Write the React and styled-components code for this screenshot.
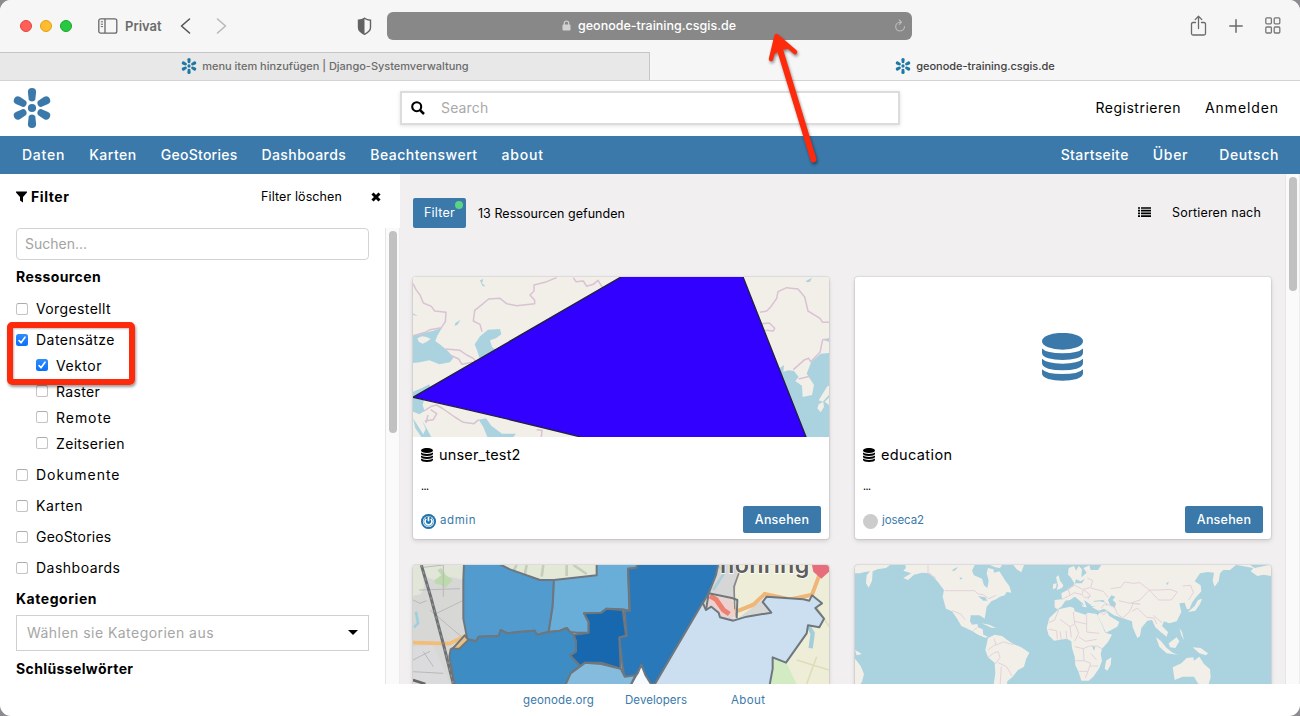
import React from 'react';
import styled, { createGlobalStyle } from 'styled-components';

const BLUE = '#3a79aa';

const GlobalStyle = createGlobalStyle`
  * { box-sizing: border-box; }
  body { margin: 0; background: #8d8b8f; font-family: Inter, "Liberation Sans", sans-serif; color: #000; }
  svg { display: block; flex: none; }
`;

const Text = styled.span`
  font-size: ${p => p.$size || 14}px;
  font-weight: ${p => p.$weight || 400};
  letter-spacing: ${p => p.$track || 0}px;
  color: ${p => p.$color || 'inherit'};
  white-space: nowrap;
`;

const Window = styled.div`
  position: relative;
  display: flex;
  flex-direction: column;
  width: 1300px;
  height: 716px;
  border-radius: 11px;
  overflow: hidden;
  background: #fff;
`;

/* Browser chrome */
const Toolbar = styled.div`
  display: flex;
  align-items: center;
  height: 52px;
  flex: none;
  padding: 0 19px 0 20px;
  background: #f6f6f6;
`;
const Lights = styled.div`
  display: flex;
  gap: 8px;
  margin-right: 26px;
`;
const Light = styled.span`
  width: 12px;
  height: 12px;
  border-radius: 50%;
  background: ${p => p.$fill};
  border: 1px solid ${p => p.$edge};
`;
const PrivateLabel = styled(Text)`
  margin: 0 16px 0 7px;
  width: 39px;
`;
const Address = styled.div`
  display: flex;
  align-items: center;
  width: 525px;
  height: 28px;
  margin-left: 15px;
  padding: 0 6px 1px 175px;
  border-radius: 6px;
  background: #888;
  color: #fff;
`;
const Host = styled(Text)`
  margin-left: 7px;
  flex: 1;
`;
const Tools = styled.div`
  display: flex;
  align-items: center;
  gap: 22px;
  margin-left: auto;
  padding-bottom: 1px;
`;
const Tabs = styled.div`
  display: flex;
  height: 29px;
  flex: none;
  border-bottom: 1px solid #d3d3d3;
`;
const Tab = styled.div`
  display: flex;
  align-items: center;
  justify-content: center;
  gap: 5px;
  flex: 1;
  padding: 0 0 2px 1px;
  background: ${p => (p.$active ? '#f6f6f6' : '#e8e8e8')};
  border-top: 1px solid ${p => (p.$active ? '#f6f6f6' : '#c6c6c6')};
  border-right: 1px solid ${p => (p.$active ? '#f6f6f6' : '#c6c6c6')};
  color: ${p => (p.$active ? '#414141' : '#6c6c6c')};
`;

/* Page header */
const Header = styled.header`
  display: grid;
  grid-template-columns: 400px 500px 1fr;
  align-items: center;
  height: 55px;
  flex: none;
  padding-bottom: 2px;
`;
const LogoSlot = styled.div`
  padding-left: 12px;
`;
const SearchBar = styled.div`
  display: flex;
  align-items: center;
  gap: 16px;
  height: 34px;
  padding-left: 9px;
  border: 2px solid #dcdcdc;
  box-shadow: 0 1px 4px rgba(0, 0, 0, 0.12);
`;
const Account = styled.div`
  display: flex;
  justify-content: flex-end;
  gap: 24px;
  padding-right: 21px;
`;
const Nav = styled.nav`
  display: flex;
  align-items: center;
  justify-content: space-between;
  height: 38px;
  flex: none;
  padding: 0 21px 2px 22px;
  background: ${BLUE};
  color: #fff;
`;
const Menu = styled.div`
  display: flex;
  gap: 24px;
`;
const Language = styled.div`
  display: flex;
  margin-left: 7px;
`;

/* Main area */
const Main = styled.div`
  display: flex;
  height: 510px;
  flex: none;
`;
const Sidebar = styled.aside`
  width: 400px;
  display: flex;
  flex-direction: column;
`;
const SidebarHead = styled.div`
  display: flex;
  align-items: center;
  height: 54px;
  padding: 0 19px 9px 16px;
`;
const SidebarTitle = styled(Text)`
  margin-left: 4px;
  flex: 1;
`;
const ClearLink = styled(Text)`
  margin-right: 29px;
`;
const SidebarBody = styled.div`
  display: flex;
  flex: 1;
`;
const Form = styled.div`
  width: 385px;
  padding: 0 16px;
`;
const Track = styled.div`
  width: 15px;
  flex: none;
  padding: 3px 3px;
  background: #fafafa;
  border-left: 1px solid #e6e6e6;
  border-right: 1px solid #ececec;
`;
const Thumb = styled.div`
  width: 8px;
  height: ${p => p.$height}px;
  border-radius: 4px;
  background: #c1c1c1;
`;
const Input = styled.div`
  display: flex;
  align-items: center;
  height: 32px;
  padding: 0 0 2px 8px;
  border: 1px solid #d3d3d3;
  border-radius: 4px;
`;
const Heading = styled.div`
  display: flex;
  align-items: center;
  height: ${p => p.$height}px;
  padding-bottom: ${p => p.$lift || 0}px;
`;
const Check = styled.div`
  display: flex;
  align-items: center;
  gap: 8px;
  height: ${p => (p.$sub ? 26 : 31)}px;
`;
const SubList = styled.div`
  margin: -3px 0 3px;
  padding-left: 20px;
`;
const Box = styled.span`
  display: flex;
  align-items: center;
  justify-content: center;
  width: 12px;
  height: 12px;
  border-radius: 2.5px;
  border: ${p => (p.$on ? 'none' : '1px solid #c4c4c4')};
  border-top-color: #adadad;
  background: ${p => (p.$on ? 'linear-gradient(#2f8cfb, #0a6ffa)' : '#fff')};
`;
const Select = styled.div`
  display: flex;
  align-items: center;
  justify-content: space-between;
  height: 36px;
  margin-bottom: 3px;
  padding: 0 10px 1px;
  border: 1px solid #d0d0d0;
`;

const Results = styled.section`
  flex: 1;
  padding: 24px 14px 0 13px;
  background: #f1eff0;
  overflow: hidden;
`;
const ResultBar = styled.div`
  display: flex;
  align-items: center;
  height: 30px;
  margin-bottom: 49px;
  padding-right: 10px;
`;
const FilterButton = styled.div`
  position: relative;
  display: flex;
  justify-content: center;
  width: 53px;
  height: 30px;
  margin-right: 12px;
  padding-top: 7px;
  border-radius: 2px;
  background: ${BLUE};
  color: #fff;
  line-height: 15px;
`;
const Dot = styled.span`
  position: absolute;
  top: 3px;
  right: 3px;
  width: 8px;
  height: 8px;
  border-radius: 50%;
  background: #5ad384;
`;
const SortGroup = styled.div`
  display: flex;
  align-items: center;
  gap: 21px;
  margin-left: auto;
  padding-bottom: 2px;
`;
const Cards = styled.div`
  display: grid;
  grid-template-columns: 416px 416px;
  gap: 26px;
`;
const Card = styled.article`
  height: 262px;
  border-radius: 3px;
  overflow: hidden;
  background: #fff;
  box-shadow: 0 0 1px 1px rgba(0, 0, 0, 0.07), 0 2px 5px rgba(0, 0, 0, 0.14);
`;
const Thumbnail = styled.div`
  display: flex;
  align-items: center;
  justify-content: center;
  height: 160px;
`;
const Placeholder = styled.div`
  padding-right: 2px;
`;
const CardBody = styled.div`
  display: flex;
  flex-direction: column;
  height: 102px;
  padding: 8px 8px 6px;
`;
const CardTitle = styled.div`
  display: flex;
  align-items: center;
  gap: 6px;
  height: 20px;
  padding-bottom: 1px;
`;
const Excerpt = styled.div`
  height: 22px;
  margin-top: 10px;
  display: flex;
  align-items: center;
`;
const CardFoot = styled.div`
  display: flex;
  align-items: center;
  height: 27px;
  margin-top: auto;
`;
const Avatar = styled.span`
  width: 15px;
  height: 15px;
  margin: 4px 4px 0 0;
  border-radius: 50%;
  background: #ccc;
`;
const ViewButton = styled.span`
  display: flex;
  align-items: center;
  justify-content: center;
  width: 78px;
  height: 27px;
  margin-left: auto;
  border-radius: 2px;
  background: ${BLUE};
  color: #fff;
`;
const Footer = styled.footer`
  display: flex;
  align-items: center;
  flex: 1;
  padding-left: 523px;
  color: ${BLUE};
`;
const FooterLink = styled(Text)`
  width: ${p => p.$width}px;
`;

/* Annotations drawn over the page */
const Highlight = styled.div`
  position: absolute;
  left: 7px;
  top: 322px;
  width: 128px;
  height: 63px;
  border: 6px solid #fd2b0b;
  border-radius: 5px;
  box-shadow: 1px 2px 3px rgba(0, 0, 0, 0.4), inset 1px 1px 2px rgba(0, 0, 0, 0.25);
`;
const Arrow = styled.svg`
  position: absolute;
  left: 755px;
  top: 25px;
  filter: drop-shadow(1px 2px 1.5px rgba(0, 0, 0, 0.45));
`;

const Flower = ({ size, color, petal = 'M-3.3 -8.5L-4.1 -16Q-4.1 -20 0 -20Q4.1 -20 4.1 -16L3.3 -8.5Q2.6 -6.6 0 -6.6Q-2.6 -6.6 -3.3 -8.5Z' }) => (
  <svg width={size} height={size} viewBox="-20 -20 40 40" fill={color}>
    <circle r="4.1" />
    {[0, 62, 118, 180, 242, 298].map(a => <path key={a} transform={`rotate(${a})`} d={petal} />)}
  </svg>
);

const Database = ({ width, height, color }) => (
  <svg width={width} height={height} viewBox="606 219 123 144" preserveAspectRatio="none" fill={color}>
    <ellipse cx="667.5" cy="244" rx="61.5" ry="25.5" />
    {[0, 31, 62].map(y => (
      <path key={y} transform={`translate(0 ${y})`} d="M606 265.500Q620 280 667.500 280Q715 280 729 265.500V278Q729 289 710 295Q692 300 667.500 300Q643 300 625 295Q606 289 606 278Z" />
    ))}
  </svg>
);

const SidebarIcon = () => (
  <svg width="20" height="16" viewBox="0 0 20 16" fill="none" stroke="#686868" strokeWidth="1.300">
    <rect x=".8" y=".8" width="18" height="14.400" rx="2" />
    <path d="M7 1v14" /><path d="M2.800 3.800h2.200M2.800 6.200h2.200M2.800 8.600h2.200" strokeWidth="1" />
  </svg>
);
const ShieldIcon = () => (
  <svg width="15" height="19" viewBox="0 0 15 19">
    <path d="M7.500 1.200Q10 3 13.500 3.200V10.500Q13.500 14.500 7.500 17.300Q1.500 14.500 1.500 10.500V3.200Q5 3 7.500 1.200Z" fill="none" stroke="#636363" strokeWidth="1.400" />
    <path d="M7.500 1.200V17.300Q1.500 14.500 1.500 10.500V3.200Q5 3 7.500 1.200Z" fill="#636363" />
  </svg>
);
const Chevron = ({ right }) => (
  <svg width="11" height="18" viewBox="0 0 11 18" fill="none" stroke={right ? '#b9b9b9' : '#555'} strokeWidth="1.600" strokeLinecap="round" strokeLinejoin="round">
    <path d={right ? 'M1.500 2L9.500 9L1.500 16' : 'M9.500 2L1.500 9L9.500 16'} />
  </svg>
);
const BackForward = styled.div`
  display: flex;
  gap: 25px;
  margin-right: 130px;
`;

const Land = '#f2efe9';
const Sea = '#aad3df';

const AsiaMap = () => (
  <svg width="416" height="160" viewBox="39 306 1248 480">
    <rect x="39" y="306" width="1248" height="480" fill={Land} />
    <g fill={Sea}>
      <path d="M39 482L60 476L98 468L126 458L112 482L106 498L122 510L146 530L160 548L150 562L118 568L88 556L60 562L39 564Z" />
      <path d="M224 508L240 484L264 464L300 462L304 478L288 490L270 496L276 516L292 528L260 545L238 548L232 528Z" />
      <path d="M39 650L64 640L88 628L92 646L66 668L39 682Z" />
      <path d="M39 672L72 674L68 690L74 708L58 718L39 710Z" />
      <path d="M39 730L56 756L70 778L77 762L66 736L82 764L94 786H64L46 760Z" />
      <path d="M236 734L258 730L274 752L306 776L348 776L340 786H262L250 756Z" />
      <path d="M240 316L250 312L246 324L256 334L248 334Z" />
      <path d="M166 444L182 434L172 450L164 452ZM39 415L54 424L40 420Z" />
      <path d="M1138 580L1152 570L1150 590L1166 586L1182 588L1196 606L1186 618L1206 632L1208 666L1236 660L1242 630L1220 596L1234 560L1262 536L1287 534V786H1218L1190 714Z" />
      <path d="M1218 318L1236 308L1230 320L1220 322ZM1272 496L1287 490V500Z" />
    </g>
    <g fill={Land}>
      <path d="M52 490L66 484L80 486L92 492L80 500L68 506L56 500Z" />
      <path d="M1282 634L1287 632V660L1268 680L1256 676ZM1256 688L1270 680L1272 696L1262 712L1252 700ZM1274 680L1287 668V690Z" />
    </g>
    <g fill="none" stroke="#d9c2d3" strokeWidth="4.500" strokeLinejoin="round">
      <path d="M39 326L48 344L60 360L70 384L94 394L104 408L138 412L136 440L124 458L90 464L76 472L39 482" />
      <path d="M246 470L240 448L220 438L224 406L242 392L266 372L300 370L320 386L350 392L404 386L404 376L390 360L402 348L402 330L440 320L470 308" />
      <path d="M520 308L528 320L550 318L560 334L580 328L594 316L604 332L610 340" />
      <path d="M136 522L180 526L200 540L220 550L234 570M150 540L176 552L186 568L216 562L226 574" />
      <path d="M72 708L84 700L94 694L110 690L130 702L164 726L190 742L222 746L236 734M74 738L100 734L110 716L92 704M84 720L78 744M410 764L426 766L424 786" />
      <path d="M1080 412L1100 408L1112 396L1130 370L1134 350L1160 338L1194 342L1214 366L1224 408L1260 430L1268 442H1287" />
      <path d="M1086 446L1108 444L1124 460L1120 468L1096 466M1180 584L1214 554L1226 550L1232 560L1260 532L1268 494L1287 492M1196 612L1230 604" />
    </g>
    <path d="M39 667L668 303H1028L1219 788H550Q300 725 39 667Z" fill="#3100ff" stroke="#242044" strokeWidth="4" />
  </svg>
);

const DistrictMap = () => (
  <svg width="416" height="160" viewBox="39 405 1248 480">
    <rect x="39" y="405" width="1248" height="480" fill="#d7d7d6" />
    <path d="M39 405H64L72 470L62 492L39 498ZM64 405H190V450L150 440L110 452L76 440Z" fill="#e2e6d9" />
    <path d="M104 450L124 436L112 420L124 414L138 436L158 450L136 474L122 464L104 460Z" fill="#bddaac" />
    <path d="M39 650L100 646L150 762H39Z" fill="#dbdbdd" />
    <path d="M39 510L60 520L80 512M70 412L130 405M90 540L190 625M110 550L196 508M58 480L180 476M130 405V500M39 690L90 664M100 710L70 665M39 725L130 730" stroke="#b9b9b9" strokeWidth="3" fill="none" />
    <path d="M48 545L54 580L42 592" stroke="#9ed0dc" strokeWidth="8" fill="none" />
    <path d="M39 638L148 641L200 616" stroke="#f4bd76" strokeWidth="11" fill="none" />
    <path d="M290 405H590V436L460 448L420 446L330 418Z" fill="#e4e8d7" />
    <path d="M350 405L340 424M380 405L374 436M430 405L425 440M500 405V438M520 405L560 432" stroke="#c5cdbb" strokeWidth="8" fill="none" />
    <path d="M945 405H1287V762H1110L1120 680L1222 586L1100 500L1010 568L915 530Z" fill="#eeeed8" />
    <path d="M945 405H1018L1002 502L926 490Z" fill="#d6d6d6" />
    <path d="M950 405L975 425L940 480" stroke="#a9cfdb" strokeWidth="8" fill="none" />
    <path d="M1018 425L1002 470L1005 560" stroke="#888" strokeWidth="5" fill="none" />
    <path d="M1260 430L1236 494L1170 508L1094 492L1060 524L1016 542L976 548" stroke="#efb678" strokeWidth="12" fill="none" />
    <path d="M922 494L996 506L1008 562L970 562L920 536Z" fill="#ecd1d1" />
    <path d="M930 498L948 508L970 540L988 552" stroke="#ee806f" strokeWidth="15" fill="none" />
    <path d="M1236 405H1287V425L1264 446L1240 425Z" fill="#e76c7c" />
    <path d="M1226 590L1238 610L1232 655" stroke="#a3cdd9" strokeWidth="13" fill="none" />
    <path d="M1244 520L1287 590M1190 690L1287 720M1220 762L1250 680" stroke="#dfddb8" strokeWidth="5" fill="none" />
    <path d="M1118 682L1158 696L1190 762H1110Z" fill="#d3ebc3" />
    <text x="960" y="429" fontFamily="Inter, sans-serif" fontSize="70" fontWeight="600" fill="#5e5e5e" stroke="#fff" strokeWidth="4" paintOrder="stroke" textLength="268">honring</text>
    <g stroke="#6e777d" strokeWidth="6" strokeLinejoin="round">
      <path d="M192 400H294L330 418L420 450H462L458 530L446 606L410 614L404 602L354 606L322 610L302 600L296 618L236 620L228 634L202 628L190 566V450Z" fill="#519bce" />
      <path d="M462 450L590 436V400H715L708 414L684 416L688 542L668 538L620 536L604 548L552 550L566 576V608H532L510 606L500 594L480 602L446 606L458 530Z" fill="#69aed8" />
      <path d="M715 400H955L948 435L926 490L765 762H736L724 706L706 740H674L668 712L658 622L680 618L674 542H690L684 416L708 414Z" fill="#2979ba" />
      <path d="M552 550L604 548L620 536L668 540L678 616L658 622L662 716L604 698L556 698L540 708L510 676L528 664V634L520 614L566 608V576Z" fill="#1868b0" />
      <path d="M202 628L228 634L236 620L296 618L302 600L322 610L354 606L404 602L410 614L446 606L480 602L500 594L510 606L520 614L528 634V664L510 676L540 708L512 730L494 770H165L148 680L152 658Z" fill="#3d8cc4" />
      <path d="M494 770L512 730L556 698L604 702L662 716L674 740L706 736L690 770Z" fill="#85bbdd" />
      <path d="M690 770L706 740L714 728L724 704L736 735L758 770Z" fill="#f5faff" />
      <path d="M765 762L908 518L918 540L934 530L956 548L960 562L1000 572L1040 560L1114 548L1088 516L1100 500L1210 508L1228 512L1236 496L1266 520L1246 534L1272 566L1258 592L1224 586L1220 610L1158 698L1118 682V716L1108 770H760Z" fill="#ccdff1" />
      <path d="M926 490L996 504L1012 510L1010 565M926 490L918 540" fill="none" />
      <path d="M194 616L158 656H178L205 630Z" fill="#e5bf86" />
    </g>
    <path d="M64 405L92 500L132 650L160 762" stroke="#6e7174" strokeWidth="9" fill="none" />
    <path d="M64 405L92 500L132 650L160 762" stroke="#8f9193" strokeWidth="4" fill="none" strokeDasharray="8 12" />
    <path d="M39 750L76 762" stroke="#666" strokeWidth="8" />
  </svg>
);

const WorldMap = () => (
  <svg width="416" height="160" viewBox="45 75 1248 480">
    <rect x="45" y="75" width="1248" height="480" fill={Sea} />
    <g fill={Land}>
      <path d="M45 75H150L138 84L112 88L98 94L96 122L86 143L78 130L80 106L90 94L74 96L60 100H45Z" />
      <path d="M196 75H404L396 92L402 106L426 116L432 136L442 144L446 122L440 100L444 84L460 88L462 98L478 94L496 122L508 138L514 158L500 156L494 166L480 170L468 178L454 184L440 200L438 212L434 236L428 232L418 226L392 226L390 244L396 254L412 252L414 262L428 268L430 284L444 290L436 293L414 284L398 274L382 266L364 258L350 234L336 214L318 206L308 170L312 150L292 124L270 100L246 98L222 104L204 120L190 114L214 100L190 92L198 84Z" />
      <path d="M450 75H486L480 84L466 82ZM520 75H552L544 97L530 88Z" />
      <path d="M444 294L464 284L486 288L502 300L520 312L544 322L568 338L558 358L552 380L534 390L518 410L502 424L500 440H460L466 400L464 368L444 352L436 330Z" />
      <path d="M656 208L690 200L702 204L704 214L736 224L744 218L770 222L782 246L796 278L816 284L804 306L786 326L782 342L786 362L778 384L760 410L746 422L724 422L716 396L706 376L704 350L696 324L694 304L680 296L642 302L626 286L620 264L628 234Z" />
      <path d="M798 362L814 352L812 374L802 392L794 386Z" />
      <path d="M644 202V180L666 178L664 160L690 146L704 132L692 112L684 104L686 84L702 78L708 92L716 78L726 88L724 112L740 98L730 84L748 76L752 90L774 90L784 75H1188L1170 90L1150 90L1140 100L1136 124L1124 140L1118 122L1122 98L1104 96L1080 100L1064 124L1082 136L1084 154L1066 174L1056 188L1048 208L1040 206L1034 188L1018 190L1024 216L1010 244L988 250L972 244L966 258L984 276L980 290L962 276L946 262L936 240L922 242L904 264L900 288L892 294L878 262L876 244L858 238L822 226L804 214L792 206L776 212L756 202L746 190L732 180L740 202L728 200L716 180L704 170L690 180L676 182L664 200L652 208Z" />
      <path d="M772 226L780 218L800 214L808 228L838 246L832 260L798 278L784 248Z" />
      <path d="M648 112L656 106L660 122L670 136L666 144L650 150L654 136ZM640 132L650 130L648 144L638 148Z" />
      <path d="M1074 180L1086 176L1080 192L1066 212L1044 216L1064 198Z" />
      <path d="M948 292L962 302L980 324L998 338L1014 344L980 340L958 320ZM986 310L1010 292L1018 304L1006 324L990 322ZM1018 264L1026 276L1032 300L1024 286ZM1058 322L1082 324L1104 340L1098 346L1078 340Z" />
      <path d="M998 382L1024 370L1040 354L1060 352L1062 362L1078 350L1092 372L1110 388L1112 412L1104 440H1080L1062 410L1028 410L1004 420Z" />
      <path d="M1190 75H1230L1244 84L1286 75H1293V108L1270 104L1252 108L1232 94L1240 84ZM45 356L62 378L72 402L66 425L56 440H45ZM45 330L66 342L50 346Z" />
      <path d="M424 250L448 254L460 260L470 262L456 264L438 256Z" />
    </g>
    <g fill={Sea}>
      <path d="M748 196L764 182L790 180L802 196L778 198L750 202ZM804 180L814 166L826 170L818 180L828 190L824 204L812 198ZM700 178L706 172L728 190L732 198L718 190ZM414 168L436 172L442 182L430 182ZM708 118L722 124L734 116L726 130L704 130Z" />
      <path d="M334 92L346 84L354 82L344 92ZM358 112L368 114L362 119ZM756 318L766 320L762 332ZM978 132L986 124L984 134Z" />
    </g>
    <g fill={Land}><path d="M754 186L778 184L800 188L796 198L770 202L752 197Z" /></g>
    <g fill="none" stroke="#e3d2d9" strokeWidth="3" strokeLinejoin="round">
      <path d="M264 75V100L288 114M314 152H404L414 162L430 164L446 176L468 166M336 212L362 222L376 240M400 272L412 262M462 296L468 312L444 330M466 316L490 306L520 314M444 352L460 340L474 334L480 352L466 372M474 368L500 380L516 408M484 380L480 440" />
      <path d="M656 210L644 240L626 248M660 238L690 260L704 252L700 216M704 244L740 252V224M740 252V276L778 280M690 260L694 292M706 254L716 280L704 304M626 268L650 272L652 298M660 274L664 300M678 272L680 296M716 290L736 304L770 298M704 320L730 326L748 318L770 318L786 326M730 326L732 362L706 362M732 362L752 370L744 394L718 394M752 340L770 360M750 378L774 378M736 414L744 394" />
      <path d="M666 178L690 166L684 146L704 136M690 166L704 158L726 164L730 148L752 142L758 122L742 114M704 136L728 148M730 148L750 164L744 178M752 144L790 154L804 172M726 164L736 174L752 168M784 204L796 190L824 202L832 222L848 234L868 216L880 190L900 192M776 212L790 224L802 216M812 146L842 142L854 126L880 130L900 128L928 150L900 180L870 190L836 182M928 150L960 150L990 148L1012 156L994 180L956 180L928 150M1028 138L1052 136L1060 158L1046 180M876 214L892 204L920 232L942 234L950 252M940 226L966 248M900 192L872 190" />
    </g>
  </svg>
);

const navItems = [['Daten', 0.77], ['Karten', 0.52], ['GeoStories', 0.25], ['Dashboards', 0.42], ['Beachtenswert', 0.5], ['about', 0.8]];

const CheckItem = ({ label, track, on, sub }) => (
  <Check $sub={sub}>
    <Box $on={on}>
      {on && <svg width="10" height="10" viewBox="0 0 10 10" fill="none" stroke="#fff" strokeWidth="1.600" strokeLinecap="round" strokeLinejoin="round"><path d="M2 5.500L4 7.800L8 2.200" /></svg>}
    </Box>
    <Text $track={track}>{label}</Text>
  </Check>
);

const ResourceCard = ({ title, track, owner, ownerTrack, avatar, children }) => (
  <Card>
    <Thumbnail>{children}</Thumbnail>
    <CardBody>
      <CardTitle>
        <Database width={12} height={14} color="#000" />
        <Text $size={14.5} $track={track}>{title}</Text>
      </CardTitle>
      <Excerpt><Text $size={10} $weight={500} $track={-0.5}>...</Text></Excerpt>
      <CardFoot>
        <Avatar as={avatar ? 'div' : 'span'}>{avatar}</Avatar>
        <Text $size={11.5} $track={ownerTrack} $color={BLUE}>{owner}</Text>
        <ViewButton><Text $size={12.5} $weight={450} $track={0.22}>Ansehen</Text></ViewButton>
      </CardFoot>
    </CardBody>
  </Card>
);

const PowerAvatar = () => (
  <svg width="15" height="15" viewBox="0 0 15 15">
    <circle cx="7.500" cy="7.500" r="7.500" fill="#1e73ae" />
    <circle cx="7.500" cy="7.500" r="5.600" fill="#fff" />
    <circle cx="7.500" cy="7.500" r="4.900" fill="#1e73ae" />
    <path d="M7.500 3V7.200M9.800 4.800A3.500 3.500 0 1 1 5.200 4.800" fill="none" stroke="#fff" strokeWidth="1.700" />
  </svg>
);

export default function App() {
  return (
    <Window>
      <GlobalStyle />
      <Toolbar>
        <Lights>
          <Light $fill="#fe5f57" $edge="#e2463f" />
          <Light $fill="#febc2e" $edge="#e1a116" />
          <Light $fill="#28c840" $edge="#17a82b" />
        </Lights>
        <SidebarIcon />
        <PrivateLabel $size={13} $weight={600} $color="#6b6b6b">Privat</PrivateLabel>
        <BackForward><Chevron /><Chevron right /></BackForward>
        <ShieldIcon />
        <Address>
          <svg width="9" height="11" viewBox="0 0 9 11"><rect x=".5" y="4.600" width="8" height="6" rx="1" fill="#d2d2d2" /><path d="M2.300 5V3.200a2.200 2.200 0 0 1 4.400 0V5" fill="none" stroke="#d2d2d2" strokeWidth="1.200" /></svg>
          <Host $size={12.5} $weight={500}>geonode-training.csgis.de</Host>
          <svg width="12" height="13" viewBox="0 0 12 13" fill="none" stroke="#bdbdbd" strokeWidth="1.100" strokeLinecap="round" strokeLinejoin="round"><path d="M7.300 3.200H6A4.400 4.400 0 1 0 10.500 7.600M5.300 1L7.500 3.200L5.300 5.400" /></svg>
        </Address>
        <Tools>
          <svg width="17" height="22" viewBox="0 0 17 22" fill="none" stroke="#6b6b6b" strokeWidth="1.300" strokeLinecap="round" strokeLinejoin="round"><path d="M5.500 7.500H3Q1.500 7.500 1.500 9V18.500Q1.500 20 3 20H14Q15.500 20 15.500 18.500V9Q15.500 7.500 14 7.500H11.500M8.500 13.500V1.500M5.200 4.600L8.500 1.300L11.800 4.600" /></svg>
          <svg width="14" height="14" viewBox="0 0 14 14" stroke="#6b6b6b" strokeWidth="1.500" strokeLinecap="round"><path d="M7 .8V13.200M.8 7H13.200" /></svg>
          <svg width="16" height="17" viewBox="0 0 16 17" fill="none" stroke="#777" strokeWidth="1.300"><rect x=".8" y=".8" width="5.600" height="6" rx="1" /><rect x="9.200" y=".8" width="5.600" height="6" rx="1" /><rect x=".8" y="10" width="5.600" height="6" rx="1" /><rect x="9.200" y="10" width="5.600" height="6" rx="1" /></svg>
        </Tools>
      </Toolbar>
      <Tabs>
        <Tab>
          <Flower size={16} color="#1f77a4" />
          <Text $size={11} $weight={450} $track={-0.02}>menu item hinzufügen | Django-Systemverwaltung</Text>
        </Tab>
        <Tab $active>
          <Flower size={16} color="#1f77a4" />
          <Text $size={11} $weight={450} $track={-0.02}>geonode-training.csgis.de</Text>
        </Tab>
      </Tabs>

      <Header>
        <LogoSlot><Flower size={40} color={BLUE} /></LogoSlot>
        <SearchBar>
          <svg width="14" height="14" viewBox="0 0 14 14" fill="none" stroke="#000" strokeWidth="2.100"><circle cx="5.700" cy="5.700" r="4.500" /><path d="M8.800 8.800L13 13" strokeWidth="2.500" /></svg>
          <Text $track={0.15} $color="#a9a9a9">Search</Text>
        </SearchBar>
        <Account>
          <Text $track={0.5}>Registrieren</Text>
          <Text $track={0.91}>Anmelden</Text>
        </Account>
      </Header>
      <Nav>
        <Menu>{navItems.map(([t, k]) => <Text key={t} $weight={450} $track={k}>{t}</Text>)}</Menu>
        <Menu>
          <Text $weight={450} $track={0.38}>Startseite</Text>
          <Text $weight={450} $track={0.7}>Über</Text>
          <Language><Text $weight={450} $track={0.62}>Deutsch</Text></Language>
        </Menu>
      </Nav>

      <Main>
        <Sidebar>
          <SidebarHead>
            <svg width="11" height="12" viewBox="0 0 11 12"><path d="M0 .5H11V1.500L7 6V11.500L4 9.500V6L0 1.500Z" /></svg>
            <SidebarTitle $weight={700} $track={0.58}>Filter</SidebarTitle>
            <ClearLink $size={12.5} $track={0.11}>Filter löschen</ClearLink>
            <svg width="10" height="10" viewBox="0 0 10 10" stroke="#000" strokeWidth="3"><path d="M1.500 1.500L8.500 8.500M8.500 1.500L1.500 8.500" /></svg>
          </SidebarHead>
          <SidebarBody>
            <Form>
              <Input><Text $color="#a3a3a3">Suchen...</Text></Input>
              <Heading $height={33}><Text $weight={700} $track={0.4}>Ressourcen</Text></Heading>
              <CheckItem label="Vorgestellt" track={0.39} />
              <CheckItem label="Datensätze" track={0.46} on />
              <SubList>
                <CheckItem sub label="Vektor" track={0.52} on />
                <CheckItem sub label="Raster" track={0.32} />
                <CheckItem sub label="Remote" track={0.96} />
                <CheckItem sub label="Zeitserien" track={0.33} />
              </SubList>
              <CheckItem label="Dokumente" track={0.97} />
              <CheckItem label="Karten" track={0.56} />
              <CheckItem label="GeoStories" track={0.22} />
              <CheckItem label="Dashboards" track={0.49} />
              <Heading $height={32} $lift={2}><Text $weight={700} $track={0.54}>Kategorien</Text></Heading>
              <Select>
                <Text $track={0.46} $color="#a6a6a6">Wählen sie Kategorien aus</Text>
                <svg width="10" height="5" viewBox="0 0 10 5"><path d="M0 0H10L5 5Z" /></svg>
              </Select>
              <Heading $height={30} $lift={2}><Text $weight={700} $track={0.38}>Schlüsselwörter</Text></Heading>
            </Form>
            <Track><Thumb $height={202} /></Track>
          </SidebarBody>
        </Sidebar>
        <Results>
          <ResultBar>
            <FilterButton><Text $size={12.5} $track={0.24}>Filter</Text><Dot /></FilterButton>
            <Text $size={12.5} $track={0.04}>13 Ressourcen gefunden</Text>
            <SortGroup>
              <svg width="13" height="10" viewBox="0 0 13 10" stroke="#000" strokeWidth="1.700"><path d="M0 1H2M3 1H13M0 3.700H2M3 3.700H13M0 6.400H2M3 6.400H13M0 9.100H2M3 9.100H13" /></svg>
              <Text $size={12.5} $track={0.18}>Sortieren nach</Text>
            </SortGroup>
          </ResultBar>
          <Cards>
            <ResourceCard title="unser_test2" track={0.18} owner="admin" ownerTrack={0.57} avatar={<PowerAvatar />}><AsiaMap /></ResourceCard>
            <ResourceCard title="education" track={0.38} owner="joseca2" ownerTrack={-0.09}><Placeholder><Database width={41} height={48} color={BLUE} /></Placeholder></ResourceCard>
            <Card><DistrictMap /></Card>
            <Card><WorldMap /></Card>
          </Cards>
        </Results>
        <Track><Thumb $height={114} /></Track>
      </Main>

      <Footer>
        <FooterLink $size={11.5} $track={0.14} $width={102}>geonode.org</FooterLink>
        <FooterLink $size={11.5} $track={0.05} $width={106}>Developers</FooterLink>
        <FooterLink $size={11.5} $track={0.41} $width={60}>About</FooterLink>
      </Footer>

      <Highlight />
      <Arrow width="75" height="145" viewBox="755 25 75 145" fill="none" stroke="#fd2b0b" strokeLinecap="round">
        <path d="M777 40L813.500 159.500" strokeWidth="6" />
        <path d="M771 59L776.500 36L795 52" strokeWidth="4.500" strokeLinejoin="round" />
        <path d="M776.500 36L773 55L781 50L788 49Z" fill="#fd2b0b" stroke="none" />
      </Arrow>
    </Window>
  );
}
